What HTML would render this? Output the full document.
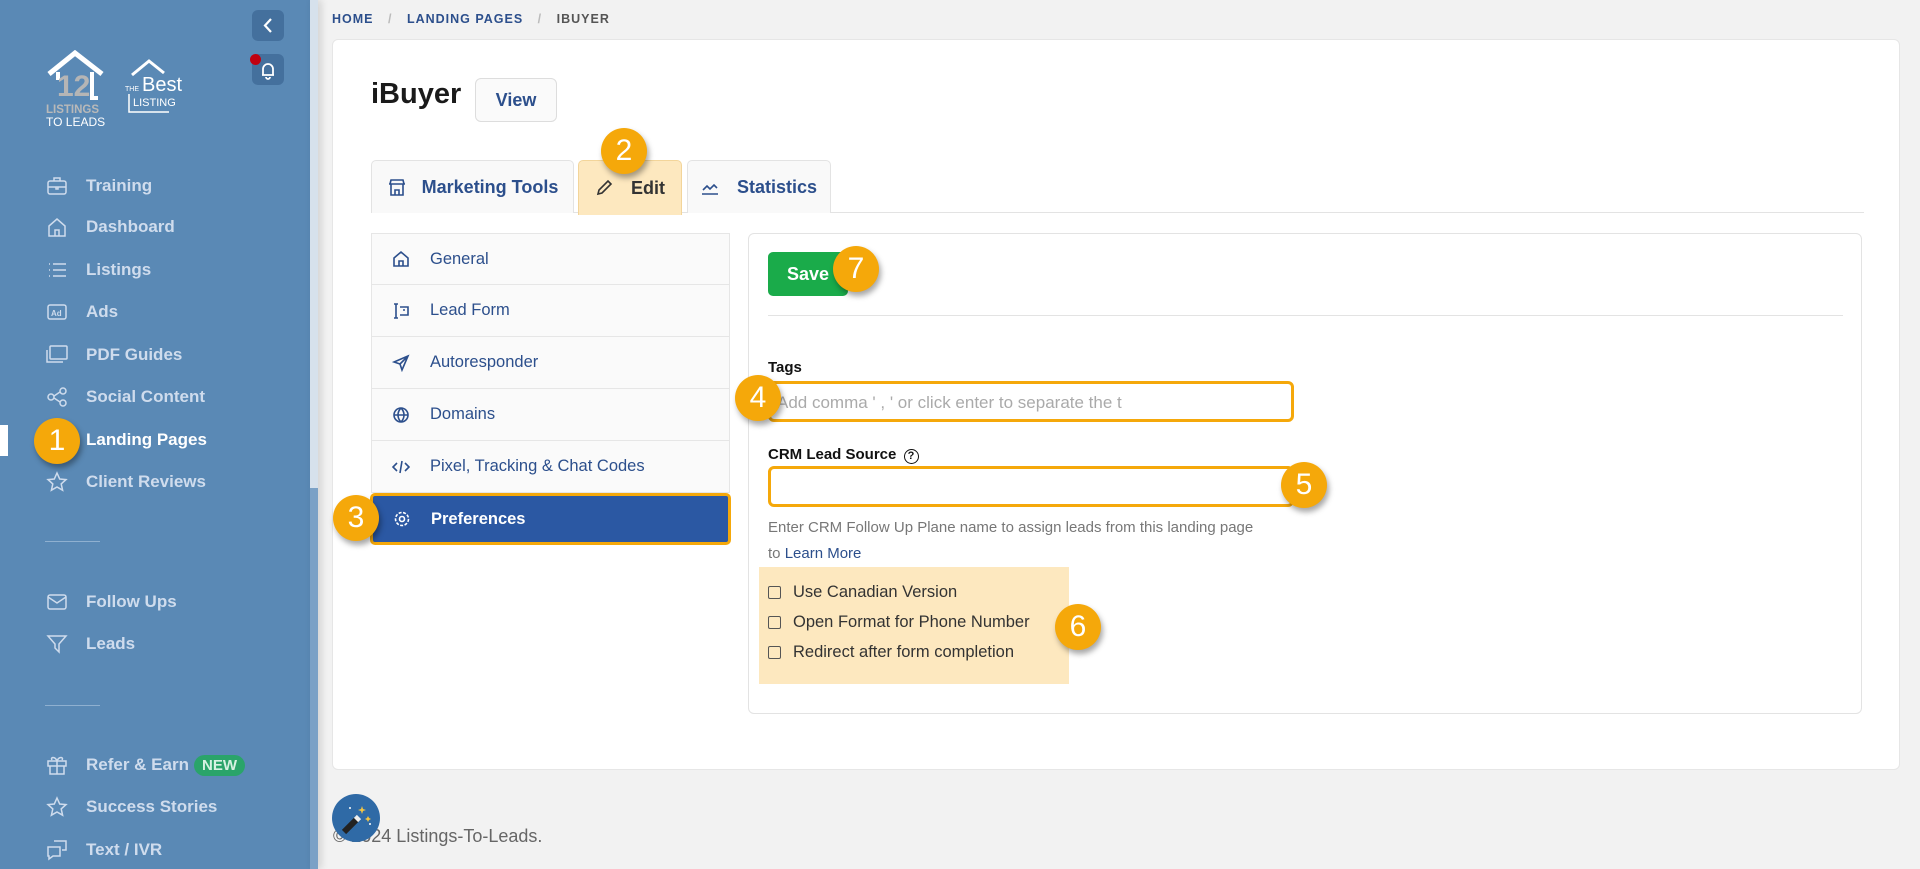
<!DOCTYPE html>
<html><head><meta charset="utf-8"><style>
*{box-sizing:border-box;margin:0;padding:0}
body{width:1920px;height:869px;overflow:hidden;background:#f2f2f2;font-family:"Liberation Sans",sans-serif;position:relative}
.sb{position:absolute;left:0;top:0;width:310px;height:869px;background:#5a89b5}
.sbs{position:absolute;left:310px;top:0;width:8px;height:869px;background:#d6e1ec;box-shadow:3px 0 8px rgba(0,0,0,.15)}
.sbs i{position:absolute;left:0;top:488px;width:8px;height:381px;background:#7ba1c6}
.nav{position:absolute;left:46px;color:#cfdced;font-size:17px;font-weight:bold;display:flex;align-items:center;height:24px}
.nav svg{width:22px;height:22px;margin-right:18px;stroke:#cfdced;fill:none;stroke-width:1.5}
.div{position:absolute;left:45px;width:55px;height:1px;background:#8fb0d0}
.badge{position:absolute;width:46px;height:46px;border-radius:50%;background:#f5a80a;color:#fff;font-size:30px;text-align:center;line-height:46px;box-shadow:2px 4px 6px rgba(0,0,0,.35);z-index:5}
.card{position:absolute;left:332px;top:39px;width:1568px;height:731px;background:#fff;border-radius:6px;border:1px solid #e6e6e6}
.bc{position:absolute;left:332px;top:12px;font-size:12.5px;font-weight:bold;letter-spacing:1px;color:#2c4f8c}
.tab{position:absolute;top:160px;height:53px;border:1px solid #e3e3e3;border-bottom:none;border-radius:5px 5px 0 0;background:#f9f9f9;color:#2c4f8c;font-weight:bold;font-size:18px;display:flex;align-items:center;justify-content:center}
.mi{position:absolute;left:371px;width:359px;height:52px;border:1px solid #e6e6e6;border-top:none;background:#fafafa;color:#2c4f8c;font-size:16.5px;display:flex;align-items:center;padding-left:20px}
.mi svg{width:18px;height:18px;margin-right:20px;stroke:#2c4f8c;fill:none;stroke-width:1.6}
.inp{position:absolute;left:768px;width:526px;height:41px;border:3.5px solid #f5a80a;border-radius:6px;background:#fff}
.cb{position:absolute;left:768px;font-size:16.5px;color:#333;display:flex;align-items:center}
.cb span{width:13px;height:13px;border:1.5px solid #555;border-radius:2px;margin-right:12px;display:inline-block}
</style></head><body>
<div class="sb"></div><div class="sbs"><i></i></div>
<div style="position:absolute;left:252px;top:10px;width:32px;height:31px;border-radius:6px;background:#44709d"><svg width="32" height="31"><path d="M19 9l-6 6.5 6 6.5" stroke="#fff" stroke-width="2.2" fill="none"/></svg></div>
<div style="position:absolute;left:252px;top:54px;width:32px;height:31px;border-radius:6px;background:#44709d"><svg width="32" height="31"><path d="M10 21h12M11 21v-6a5 5 0 0 1 10 0v6M14 23a2 2 0 0 0 4 0" stroke="#fff" stroke-width="1.8" fill="none"/></svg></div>
<div style="position:absolute;left:250px;top:54px;width:11px;height:11px;border-radius:50%;background:#c00010"></div>
<svg style="position:absolute;left:44px;top:50px" width="70" height="80"><path d="M5 24L31 3 58 24" stroke="#fff" stroke-width="5" fill="none"/><path d="M14 22v8M48 22v26h6" stroke="#fff" stroke-width="4" fill="none"/><text x="13" y="46" font-family="Liberation Sans" font-size="30" font-weight="bold" fill="#b5b5b5">12</text><text x="2" y="63" font-family="Liberation Sans" font-size="11.5" font-weight="bold" fill="#b9b9b9">LISTINGS</text><text x="2" y="76" font-family="Liberation Sans" font-size="12" fill="#fff">TO LEADS</text></svg>
<svg style="position:absolute;left:124px;top:55px" width="70" height="60"><path d="M8 20L25 6 40 18" stroke="#fff" stroke-width="3" fill="none"/><text x="1" y="36" font-family="Liberation Sans" font-size="7" fill="#fff">THE</text><text x="18" y="36" font-family="Liberation Sans" font-size="20" fill="#fff">Best</text><path d="M5 39v18h40" stroke="#fff" stroke-width="1.5" fill="none"/><text x="9" y="51" font-family="Liberation Sans" font-size="11" fill="#fff">LISTING</text></svg>
<div class="nav" style="top:174px"><svg viewBox="0 0 22 22"><rect x="2" y="6" width="18" height="13" rx="2"/><path d="M8 6V3h6v3M2 12h18M10 12v2h2v-2"/></svg>Training</div>
<div class="nav" style="top:215px"><svg viewBox="0 0 22 22"><path d="M3 10l8-7 8 7v10H3zM9 20v-6h4v6"/></svg>Dashboard</div>
<div class="nav" style="top:258px"><svg viewBox="0 0 22 22"><path d="M7 5h13M7 11h13M7 17h13M3 5h1M3 11h1M3 17h1"/></svg>Listings</div>
<div class="nav" style="top:300px"><svg viewBox="0 0 22 22"><rect x="2" y="4" width="18" height="14" rx="2"/><text x="5" y="15" font-size="8" fill="#cfdced" stroke="none" font-weight="bold">Ad</text></svg>Ads</div>
<div class="nav" style="top:343px"><svg viewBox="0 0 22 22"><rect x="4" y="2" width="17" height="13" rx="1"/><path d="M1 6v12h16"/></svg>PDF Guides</div>
<div class="nav" style="top:385px"><svg viewBox="0 0 22 22"><circle cx="5" cy="11" r="3"/><circle cx="17" cy="5" r="3"/><circle cx="17" cy="17" r="3"/><path d="M8 10l6-4M8 12l6 4"/></svg>Social Content</div>
<div style="position:absolute;left:0;top:425px;width:8px;height:31px;background:#fff"></div>
<div class="nav" style="top:428px;color:#fff"><svg viewBox="0 0 22 22"></svg>Landing Pages</div>
<div class="badge" style="left:34px;top:418px">1</div>
<div class="nav" style="top:470px"><svg viewBox="0 0 22 22"><path d="M11 2l2.7 6 6.3.6-4.8 4.3 1.4 6.3L11 16l-5.6 3.2 1.4-6.3L2 8.6 8.3 8z"/></svg>Client Reviews</div>
<div class="div" style="top:541px"></div>
<div class="nav" style="top:590px"><svg viewBox="0 0 22 22"><rect x="2" y="4" width="18" height="14" rx="2"/><path d="M2 6l9 6 9-6"/></svg>Follow Ups</div>
<div class="nav" style="top:632px"><svg viewBox="0 0 22 22"><path d="M2 3h18l-7 8v8l-4-4v-4z"/></svg>Leads</div>
<div class="div" style="top:705px"></div>
<div class="nav" style="top:753px"><svg viewBox="0 0 22 22"><rect x="2" y="7" width="18" height="5"/><path d="M4 12v8h14v-8M11 7v13M11 7c-2-5-7-4-5-1M11 7c2-5 7-4 5-1"/></svg>Refer &amp; Earn <span style="background:#2aa46a;color:#d6f2e2;border-radius:12px;padding:2px 8px;margin-left:5px;font-size:15px">NEW</span></div>
<div class="nav" style="top:795px"><svg viewBox="0 0 22 22"><path d="M11 2l2.7 6 6.3.6-4.8 4.3 1.4 6.3L11 16l-5.6 3.2 1.4-6.3L2 8.6 8.3 8z"/></svg>Success Stories</div>
<div class="nav" style="top:838px"><svg viewBox="0 0 22 22"><path d="M8 2h12v9h-4M2 8h12v9H7l-4 3v-3H2z"/></svg>Text / IVR</div>

<div class="bc">HOME <span style="color:#bbb;margin:0 10px">/</span> LANDING PAGES <span style="color:#bbb;margin:0 10px">/</span> <span style="color:#555">IBUYER</span></div>
<div class="card"></div>
<div style="position:absolute;left:371px;top:78px;font-size:29px;font-weight:bold;color:#1a1a1a">iBuyer</div>
<div style="position:absolute;left:475px;top:78px;width:82px;height:44px;border:1px solid #ddd;border-radius:6px;background:#fafafa;color:#2c4f8c;font-weight:bold;font-size:18px;text-align:center;line-height:42px">View</div>
<div style="position:absolute;left:371px;top:212px;width:1493px;height:1px;background:#e3e3e3"></div>
<div class="tab" style="left:371px;width:203px"><svg width="20" height="20" style="margin-right:15px" fill="none" stroke="#2c4f8c" stroke-width="1.6"><path d="M2 7h16M3 7l1-4h12l1 4M4 7v11h12V7M8 18v-5h4v5"/></svg>Marketing Tools</div>
<div class="tab" style="left:578px;width:104px;background:#fde8bf;border-color:#f3d59a;height:55px;color:#333"><svg width="18" height="18" style="margin-right:18px" fill="none" stroke="#333" stroke-width="1.6"><path d="M3 15l1-4 9-9 3 3-9 9z"/></svg>Edit</div>
<div class="badge" style="left:601px;top:128px">2</div>
<div class="tab" style="left:687px;width:144px"><svg width="18" height="18" style="margin-right:18px" fill="none" stroke="#2c4f8c" stroke-width="1.6"><path d="M1 16h16M2 12l4-4 3 3 4-4 3 3"/></svg>Statistics</div>

<div style="position:absolute;left:371px;top:233px;width:359px;height:1px;background:#e6e6e6"></div>
<div class="mi" style="top:233px;border-top:1px solid #e6e6e6"><svg viewBox="0 0 18 18"><path d="M2 8l7-6 7 6v8H2zM7 16v-5h4v5"/></svg>General</div>
<div class="mi" style="top:285px"><svg viewBox="0 0 18 18"><path d="M4 2v14M2 2h4M2 16h4M8 5h8v8H8M11 8h2"/></svg>Lead Form</div>
<div class="mi" style="top:337px"><svg viewBox="0 0 18 18"><path d="M16 2L2 8l6 2 2 6zM8 10l8-8"/></svg>Autoresponder</div>
<div class="mi" style="top:389px"><svg viewBox="0 0 18 18"><circle cx="9" cy="9" r="7"/><path d="M2 9h14M9 2c-4 4-4 10 0 14M9 2c4 4 4 10 0 14"/></svg>Domains</div>
<div class="mi" style="top:441px"><svg viewBox="0 0 18 18"><path d="M5 5L1 9l4 4M13 5l4 4-4 4M10 3L8 15"/></svg>Pixel, Tracking &amp; Chat Codes</div>
<div class="mi" style="top:493px;left:370px;width:361px;background:#2b58a3;color:#fff;font-weight:bold;border:3.5px solid #f5a80a;border-radius:5px"><svg viewBox="0 0 18 18" style="stroke:#fff"><circle cx="9" cy="9" r="2.5"/><circle cx="9" cy="9" r="6.5" stroke-dasharray="3 1.5"/></svg>Preferences</div>
<div class="badge" style="left:333px;top:495px">3</div>

<div style="position:absolute;left:748px;top:233px;width:1114px;height:481px;border:1px solid #e3e3e3;border-radius:6px"></div>
<div style="position:absolute;left:768px;top:252px;width:80px;height:44px;background:#1aab4a;border-radius:5px;color:#fff;font-weight:bold;font-size:18px;text-align:center;line-height:44px">Save</div>
<div class="badge" style="left:833px;top:246px">7</div>
<div style="position:absolute;left:768px;top:315px;width:1075px;height:1px;background:#e3e3e3"></div>
<div style="position:absolute;left:768px;top:359px;font-size:15px;font-weight:bold;color:#111">Tags</div>
<div class="inp" style="top:381px"><div style="padding:9px 6px;font-size:17px;color:#aaa">Add comma ' , ' or click enter to separate the t</div></div>
<div class="badge" style="left:735px;top:375px">4</div>
<div style="position:absolute;left:768px;top:446px;font-size:15px;font-weight:bold;color:#111">CRM Lead Source <span style="display:inline-block;width:15px;height:15px;border:1.5px solid #111;border-radius:50%;font-size:11px;text-align:center;line-height:12px;margin-left:3px">?</span></div>
<div class="inp" style="top:466px"></div>
<div class="badge" style="left:1281px;top:462px">5</div>
<div style="position:absolute;left:768px;top:515px;font-size:15px;color:#777;line-height:26px">Enter CRM Follow Up Plane name to assign leads from this landing page<br>to <span style="color:#2c4f8c">Learn More</span></div>
<div style="position:absolute;left:759px;top:567px;width:310px;height:117px;background:#fde8bf"></div>
<div class="cb" style="top:583px"><span></span>Use Canadian Version</div>
<div class="cb" style="top:613px"><span></span>Open Format for Phone Number</div>
<div class="cb" style="top:643px"><span></span>Redirect after form completion</div>
<div class="badge" style="left:1055px;top:604px">6</div>

<div style="position:absolute;left:333px;top:826px;font-size:18px;color:#666">© 2024 Listings-To-Leads.</div>
<div style="position:absolute;left:332px;top:794px;width:48px;height:48px;border-radius:50%;background:#2f6aa6"><svg width="48" height="48"><path d="M12 38l14-14" stroke="#222" stroke-width="6"/><path d="M24 26l3-3" stroke="#eee" stroke-width="6"/><path d="M30 12l1 3 3 1-3 1-1 3-1-3-3-1 3-1zM36 22l1 2 2 1-2 1-1 2-1-2-2-1 2-1z" fill="#f5c542"/><circle cx="18" cy="14" r="1" fill="#fff"/><circle cx="38" cy="30" r="1" fill="#fff"/></svg></div>
</body></html>
